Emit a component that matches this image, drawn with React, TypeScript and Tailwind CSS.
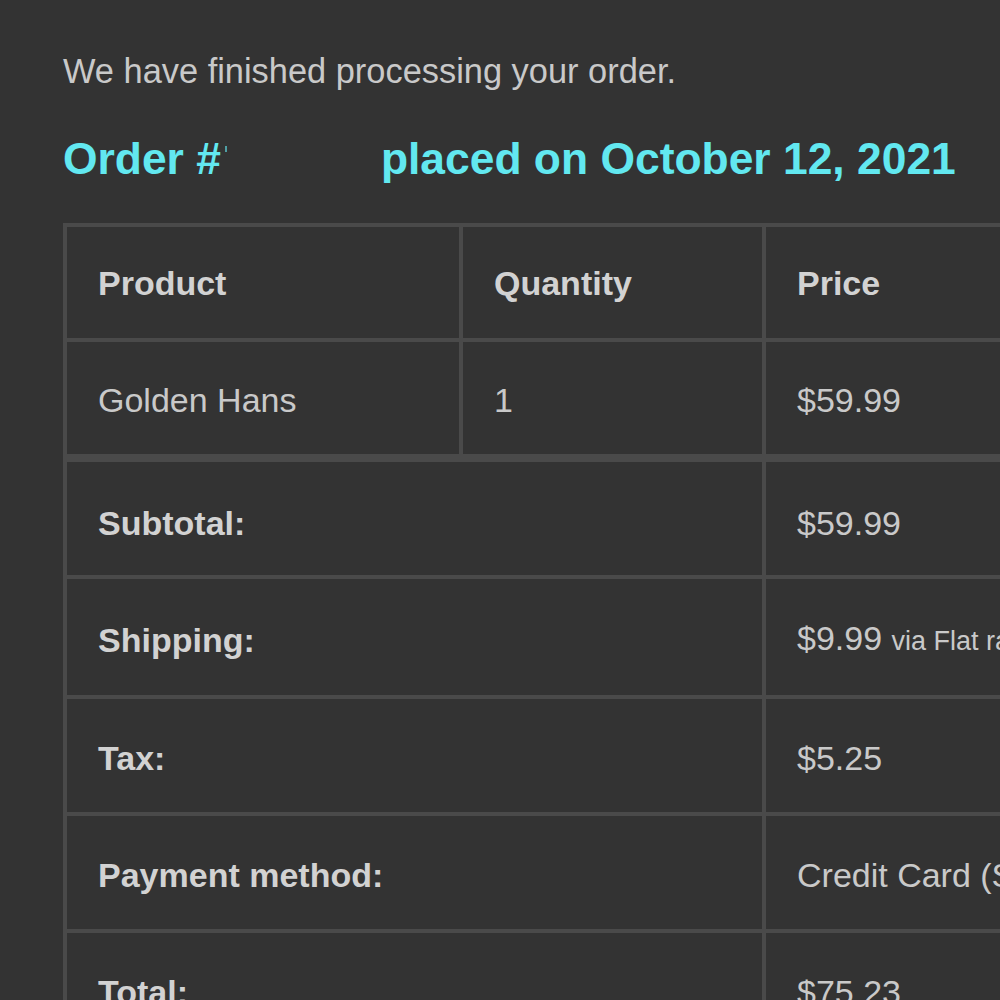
export default function App() {
  const totals = [
    { label: 'Subtotal:', value: <span>$59.99</span> },
    {
      label: 'Shipping:',
      value: (
        <span>
          $9.99 <span className="text-[27px]">via Flat rate</span>
        </span>
      ),
    },
    { label: 'Tax:', value: <span>$5.25</span> },
    { label: 'Payment method:', value: <span>Credit Card (Stripe)</span> },
    { label: 'Total:', value: <span>$75.23</span> },
  ];

  const cell = 'border-[4px] border-[#4a4a4a] px-[31px] text-left align-middle whitespace-nowrap';

  return (
    <div className="w-[1000px] h-[1000px] overflow-hidden bg-[#333333] font-['Liberation_Sans',Arial,sans-serif] text-[#c9c9c9]">
      <div className="pl-[63px] pt-[52px] w-[1200px]">
        <p className="text-[34.4px] leading-[39px]">We have finished processing your order.</p>

        <h2 className="mt-[43px] text-[44.4px] leading-[50px] font-bold text-[#62e8f0] whitespace-nowrap">
          Order #<span className="inline-block w-[2px] h-[6px] align-top mt-[12px] ml-[4px] bg-[#62e8f0]/60" />
          <span className="inline-block w-[154px]" />
          placed on October 12, 2021
        </h2>

        <table className="mt-[39px] table-fixed border-collapse text-[34px] leading-[39px]">
          <colgroup>
            <col className="w-[396px]" />
            <col className="w-[303px]" />
            <col className="w-[420px]" />
          </colgroup>
          <thead>
            <tr>
              <th className={`${cell} pt-[37px] pb-[35px] font-bold text-[#d2d2d2]`}>Product</th>
              <th className={`${cell} pt-[37px] pb-[35px] font-bold text-[#d2d2d2]`}>Quantity</th>
              <th className={`${cell} pt-[37px] pb-[35px] font-bold text-[#d2d2d2]`}>Price</th>
            </tr>
          </thead>
          <tbody>
            <tr>
              <td className={`${cell} pt-[39px] pb-[34px]`}>Golden Hans</td>
              <td className={`${cell} pt-[39px] pb-[34px]`}>1</td>
              <td className={`${cell} pt-[39px] pb-[34px]`}>$59.99</td>
            </tr>
          </tbody>
          <tfoot>
            {totals.map((row, i) => (
              <tr key={i}>
                <th
                  colSpan={2}
                  className={`${cell} font-bold text-[#d2d2d2] ${i === 0 ? 'border-t-[8px] pt-[42px] pb-[32px]' : 'pt-[40px] pb-[34px]'}`}
                >
                  {row.label}
                </th>
                <td className={`${cell} ${i === 0 ? 'border-t-[8px] pt-[42px] pb-[32px]' : 'pt-[40px] pb-[34px]'}`}>{row.value}</td>
              </tr>
            ))}
          </tfoot>
        </table>
      </div>
    </div>
  );
}
